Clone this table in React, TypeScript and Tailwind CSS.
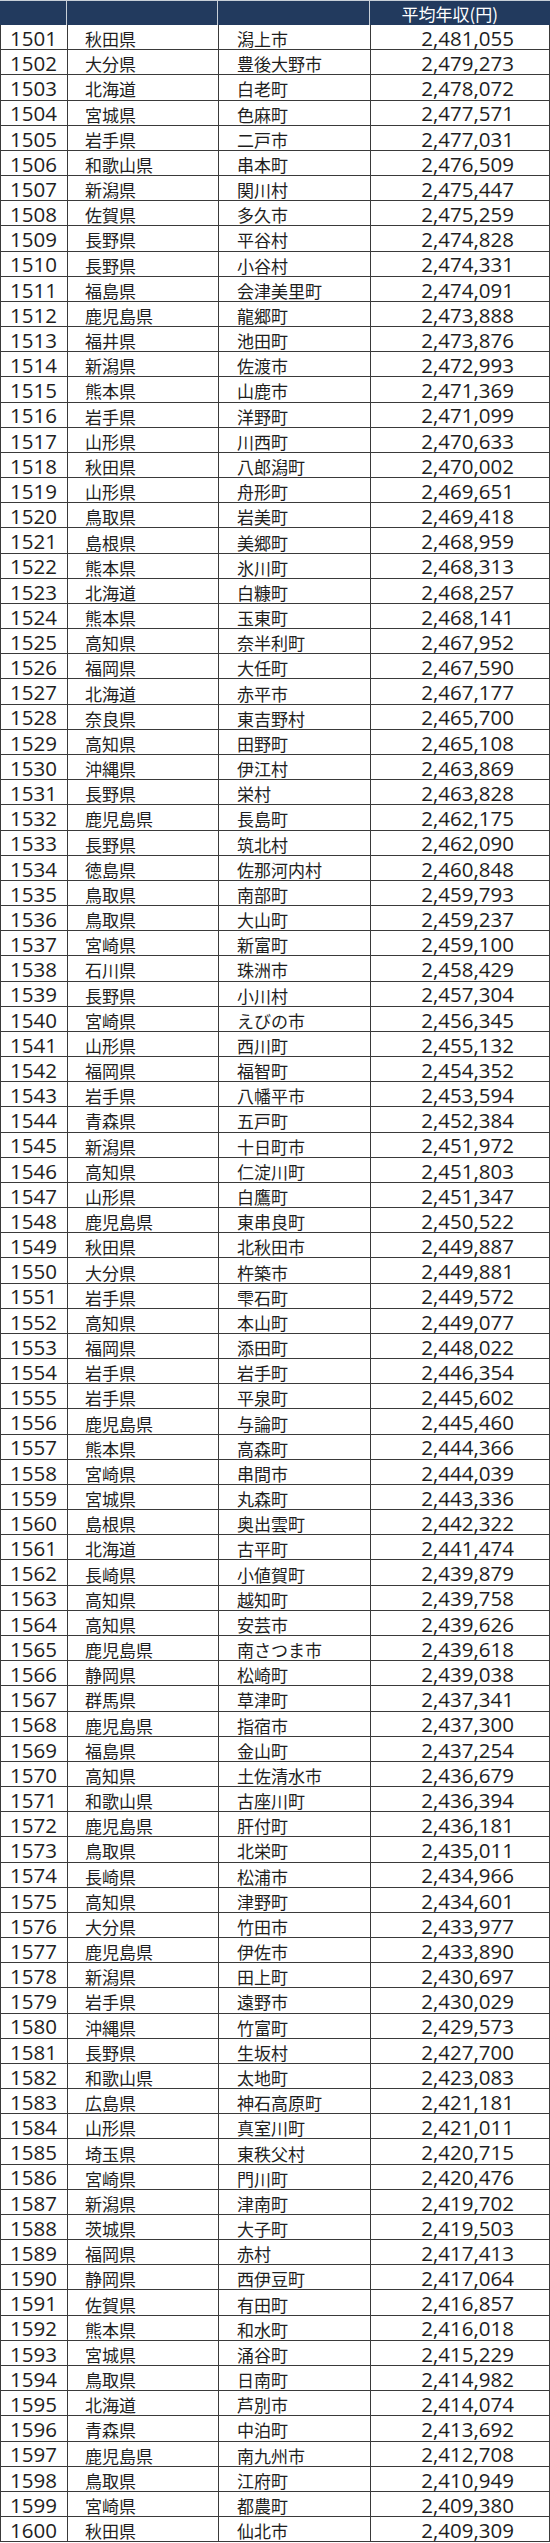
const RAW = `1501 秋田県 潟上市 2,481,055
1502 大分県 豊後大野市 2,479,273
1503 北海道 白老町 2,478,072
1504 宮城県 色麻町 2,477,571
1505 岩手県 二戸市 2,477,031
1506 和歌山県 串本町 2,476,509
1507 新潟県 関川村 2,475,447
1508 佐賀県 多久市 2,475,259
1509 長野県 平谷村 2,474,828
1510 長野県 小谷村 2,474,331
1511 福島県 会津美里町 2,474,091
1512 鹿児島県 龍郷町 2,473,888
1513 福井県 池田町 2,473,876
1514 新潟県 佐渡市 2,472,993
1515 熊本県 山鹿市 2,471,369
1516 岩手県 洋野町 2,471,099
1517 山形県 川西町 2,470,633
1518 秋田県 八郎潟町 2,470,002
1519 山形県 舟形町 2,469,651
1520 鳥取県 岩美町 2,469,418
1521 島根県 美郷町 2,468,959
1522 熊本県 氷川町 2,468,313
1523 北海道 白糠町 2,468,257
1524 熊本県 玉東町 2,468,141
1525 高知県 奈半利町 2,467,952
1526 福岡県 大任町 2,467,590
1527 北海道 赤平市 2,467,177
1528 奈良県 東吉野村 2,465,700
1529 高知県 田野町 2,465,108
1530 沖縄県 伊江村 2,463,869
1531 長野県 栄村 2,463,828
1532 鹿児島県 長島町 2,462,175
1533 長野県 筑北村 2,462,090
1534 徳島県 佐那河内村 2,460,848
1535 鳥取県 南部町 2,459,793
1536 鳥取県 大山町 2,459,237
1537 宮崎県 新富町 2,459,100
1538 石川県 珠洲市 2,458,429
1539 長野県 小川村 2,457,304
1540 宮崎県 えびの市 2,456,345
1541 山形県 西川町 2,455,132
1542 福岡県 福智町 2,454,352
1543 岩手県 八幡平市 2,453,594
1544 青森県 五戸町 2,452,384
1545 新潟県 十日町市 2,451,972
1546 高知県 仁淀川町 2,451,803
1547 山形県 白鷹町 2,451,347
1548 鹿児島県 東串良町 2,450,522
1549 秋田県 北秋田市 2,449,887
1550 大分県 杵築市 2,449,881
1551 岩手県 雫石町 2,449,572
1552 高知県 本山町 2,449,077
1553 福岡県 添田町 2,448,022
1554 岩手県 岩手町 2,446,354
1555 岩手県 平泉町 2,445,602
1556 鹿児島県 与論町 2,445,460
1557 熊本県 高森町 2,444,366
1558 宮崎県 串間市 2,444,039
1559 宮城県 丸森町 2,443,336
1560 島根県 奥出雲町 2,442,322
1561 北海道 古平町 2,441,474
1562 長崎県 小値賀町 2,439,879
1563 高知県 越知町 2,439,758
1564 高知県 安芸市 2,439,626
1565 鹿児島県 南さつま市 2,439,618
1566 静岡県 松崎町 2,439,038
1567 群馬県 草津町 2,437,341
1568 鹿児島県 指宿市 2,437,300
1569 福島県 金山町 2,437,254
1570 高知県 土佐清水市 2,436,679
1571 和歌山県 古座川町 2,436,394
1572 鹿児島県 肝付町 2,436,181
1573 鳥取県 北栄町 2,435,011
1574 長崎県 松浦市 2,434,966
1575 高知県 津野町 2,434,601
1576 大分県 竹田市 2,433,977
1577 鹿児島県 伊佐市 2,433,890
1578 新潟県 田上町 2,430,697
1579 岩手県 遠野市 2,430,029
1580 沖縄県 竹富町 2,429,573
1581 長野県 生坂村 2,427,700
1582 和歌山県 太地町 2,423,083
1583 広島県 神石高原町 2,421,181
1584 山形県 真室川町 2,421,011
1585 埼玉県 東秩父村 2,420,715
1586 宮崎県 門川町 2,420,476
1587 新潟県 津南町 2,419,702
1588 茨城県 大子町 2,419,503
1589 福岡県 赤村 2,417,413
1590 静岡県 西伊豆町 2,417,064
1591 佐賀県 有田町 2,416,857
1592 熊本県 和水町 2,416,018
1593 宮城県 涌谷町 2,415,229
1594 鳥取県 日南町 2,414,982
1595 北海道 芦別市 2,414,074
1596 青森県 中泊町 2,413,692
1597 鹿児島県 南九州市 2,412,708
1598 鳥取県 江府町 2,410,949
1599 宮崎県 都農町 2,409,380
1600 秋田県 仙北市 2,409,309`;

const ROWS = RAW.split('\n').map(line => {
  const [rank, pref, city, income] = line.split(' ');
  return { rank, pref, city, income };
});

// kanji columns and header use the CJK face, number columns a wider latin face
const CJK = "font-['Noto_Sans_CJK_JP',sans-serif]";
const NUM = "font-['Open_Sans','Noto_Sans_CJK_JP',sans-serif]";

export default function App() {
  return (
    <div className={`w-[550px] bg-white text-[#1e1e1e] ${CJK}`}>
      <div className="grid h-[25px] grid-cols-[67px_151px_152px_180px] bg-[#223a5e] text-white border-t border-[#c8cfd8]">
        <div className="border-r border-[#c8cfd8]" />
        <div className="border-r border-[#c8cfd8]" />
        <div className="border-r border-[#c8cfd8]" />
        <div className="flex items-center justify-end pr-[52px] text-[17px] leading-none">平均年収(円)</div>
      </div>
      {ROWS.map(r => (
        <div
          key={r.rank}
          className="grid h-[25.18px] grid-cols-[67px_151px_152px_180px] border-b border-l border-r border-[#3a3a3a]"
        >
          <div className={`flex items-center pl-[9px] pt-[2px] text-[20.5px] leading-none border-r border-[#3a3a3a] ${NUM}`}>{r.rank}</div>
          <div className="flex items-center pl-[17px] pt-[3px] text-[17px] leading-none border-r border-[#3a3a3a]">{r.pref}</div>
          <div className="flex items-center pl-[18px] pt-[3px] text-[17px] leading-none border-r border-[#3a3a3a]">{r.city}</div>
          <div className={`flex items-center justify-end pr-[37px] pt-[2px] text-[20.5px] leading-none ${NUM}`}>{r.income}</div>
        </div>
      ))}
    </div>
  );
}
